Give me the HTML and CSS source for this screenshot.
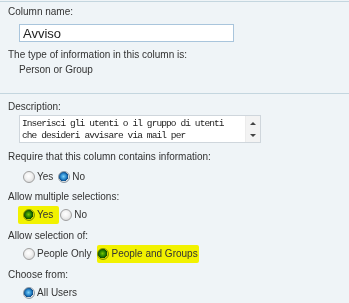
FILE: index.html
```html
<!DOCTYPE html>
<html lang="en">
<head>
  <meta charset="UTF-8">
  <title>Column settings</title>
  <link rel="stylesheet" href="styles.css">
</head>
<body>

  <!-- Name and type -->
  <div class="section first">
    <div class="label">Column name:</div>
    <input type="text" class="name-input" value="Avviso">
    <div class="label type-label">The type of information in this column is:</div>
    <div class="type-value">Person or Group</div>
  </div>

  <!-- Additional settings -->
  <div class="section">
    <div class="label">Description:</div>
    <div class="desc-box">
      <div class="desc-text">Inserisci gli utenti o il gruppo di utenti<br>che desideri avvisare via mail per</div>
      <div class="scroll">
        <span class="arrow up"></span>
        <span class="arrow down"></span>
      </div>
    </div>

    <div class="label field">Require that this column contains information:</div>
    <div class="options first-opts">
      <label class="opt"><input type="radio" name="req"> Yes</label>
      <label class="opt"><input type="radio" name="req" checked> No</label>
    </div>

    <div class="label field tight">Allow multiple selections:</div>
    <div class="options">
      <label class="opt hl hl-yes"><input type="radio" name="multi" checked> Yes</label>
      <label class="opt"><input type="radio" name="multi"> No</label>
    </div>

    <div class="label field">Allow selection of:</div>
    <div class="options">
      <label class="opt"><input type="radio" name="sel"> People Only</label>
      <label class="opt hl hl-groups"><input type="radio" name="sel" checked> People and Groups</label>
    </div>

    <div class="label field">Choose from:</div>
    <div class="options">
      <label class="opt"><input type="radio" name="from" checked> All Users</label>
    </div>
  </div>

</body>
</html>
```

FILE: styles.css
```css
body {
  font-family: 'Liberation Sans', Arial, sans-serif;
  font-size: 10px;
  line-height: 12px;
  background-color: #eff4f7;
  margin: 0;
  padding-top: 1px;
  color: #333;
}
.section {
  padding: 7px 8px 0 8px;
}
.section.first {
  border-top: 1px solid #c4d6df;
  border-bottom: 1px solid #c4d6df;
  padding-top: 4px;
  height: 87px;
}
.label {
  white-space: nowrap;
}
.name-input {
  display: block;
  margin: 6px 0 0 11px;
  width: 215px;
  height: 18px;
  box-sizing: border-box;
  border: 1px solid #a9c5dc;
  background: #fff;
  padding: 0 0 0 3px;
  font-family: 'Liberation Sans', Arial, sans-serif;
  font-size: 13px;
  color: #222;
  outline: none;
}
.type-label {
  margin-top: 7px;
}
.type-value {
  margin: 3px 0 0 11px;
}
.desc-box {
  display: flex;
  margin: 2px 0 0 11px;
  width: 242px;
  height: 28px;
  box-sizing: border-box;
  border: 1px solid #cfd6dc;
  background: #fff;
}
.desc-text {
  flex: 1;
  overflow: hidden;
  padding: 2px 0 0 2px;
  font-family: 'Liberation Mono', 'Courier New', monospace;
  font-size: 9.5px;
  letter-spacing: -0.9px;
  line-height: 12px;
  white-space: nowrap;
  color: #222;
}
.scroll {
  width: 14px;
  background: #f3f3f3;
  border-left: 1px solid #ececec;
  display: flex;
  flex-direction: column;
  justify-content: space-between;
  align-items: center;
  padding: 6px 0 5px;
}
.arrow {
  width: 0;
  height: 0;
  border-left: 3px solid transparent;
  border-right: 3px solid transparent;
}
.arrow.up {
  border-bottom: 3px solid #444;
}
.arrow.down {
  border-top: 3px solid #444;
}
.field {
  margin-top: 8px;
}
.field.tight {
  margin-top: 7px;
}
.options {
  display: flex;
  align-items: center;
  margin-top: 5px;
  padding-left: 15px;
  height: 14px;
}
.first-opts {
  margin-top: 7px;
}
.opt {
  display: flex;
  align-items: center;
  margin-right: 5px;
  white-space: nowrap;
}
.opt input {
  appearance: none;
  -webkit-appearance: none;
  width: 12px;
  height: 12px;
  margin: 0 2px 0 0;
  border-radius: 50%;
  border: 1px solid #a0a0a0;
  background: radial-gradient(circle at 45% 40%, #ffffff 0%, #f2f2f2 40%, #cfcfcf 100%);
  box-sizing: border-box;
}
.opt input:checked {
  border-color: #8c9aa6;
  background:
    radial-gradient(circle at 45% 45%, #7fd0f5 0%, #2a8ad0 35%, #0c4c8a 58%, transparent 62%),
    radial-gradient(circle at 45% 40%, #ffffff 0%, #eeeeee 50%, #cccccc 100%);
}
.hl {
  background: #f2f200;
  border-radius: 2px;
}
.hl input {
  mix-blend-mode: multiply;
}
.hl-yes {
  padding: 3px 6px 3px 5px;
  margin: 0 1px 0 -5px;
}
.hl-groups {
  padding: 3px 1px 3px 0;
  margin-left: 1px;
}
```
